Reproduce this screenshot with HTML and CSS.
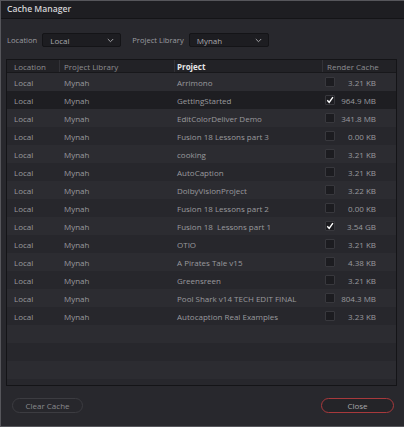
FILE: index.html
```html
<!DOCTYPE html>
<html>
<head>
<meta charset="utf-8">
<link rel="stylesheet" href="styles.css">
</head>
<body>
<div class="dialog">
  <div class="titlebar">Cache Manager</div>
  <div class="content">
    <div class="filters">
      <span class="flabel">Location</span>
      <div class="dropdown loc"><span>Local</span><svg class="chev" width="7" height="5" viewBox="0 0 7 5"><path d="M0.8 1 L3.5 3.7 L6.2 1" fill="none" stroke="#a0a0a4" stroke-width="1"/></svg></div>
      <span class="flabel lib">Project Library</span>
      <div class="dropdown"><span>Mynah</span><svg class="chev" width="7" height="5" viewBox="0 0 7 5"><path d="M0.8 1 L3.5 3.7 L6.2 1" fill="none" stroke="#a0a0a4" stroke-width="1"/></svg></div>
    </div>
    <div class="table">
      <div class="row head">
        <div class="c c1">Location</div>
        <div class="c c2">Project Library</div>
        <div class="c c3 bold">Project</div>
        <div class="c c4">Render Cache</div>
      </div>
      <div class="body">
        <div class="row odd"><div class="c c1">Local</div><div class="c c2">Mynah</div><div class="c c3">Arrimono</div><div class="c c4"><span class="cb"></span><span class="sz">3.21 KB</span></div></div>
        <div class="row sel"><div class="c c1">Local</div><div class="c c2">Mynah</div><div class="c c3">GettingStarted</div><div class="c c4"><span class="cb on"><svg width="10" height="10" viewBox="0 0 10 10"><path d="M2.3 5.3 L4.2 7.4 L7.9 2.2" fill="none" stroke="#ffffff" stroke-width="1.4"/></svg></span><span class="sz">964.9 MB</span></div></div>
        <div class="row odd"><div class="c c1">Local</div><div class="c c2">Mynah</div><div class="c c3">EditColorDeliver Demo</div><div class="c c4"><span class="cb"></span><span class="sz">341.8 MB</span></div></div>
        <div class="row even"><div class="c c1">Local</div><div class="c c2">Mynah</div><div class="c c3">Fusion 18 Lessons part 3</div><div class="c c4"><span class="cb"></span><span class="sz">0.00 KB</span></div></div>
        <div class="row odd"><div class="c c1">Local</div><div class="c c2">Mynah</div><div class="c c3">cooking</div><div class="c c4"><span class="cb"></span><span class="sz">3.21 KB</span></div></div>
        <div class="row even"><div class="c c1">Local</div><div class="c c2">Mynah</div><div class="c c3">AutoCaption</div><div class="c c4"><span class="cb"></span><span class="sz">3.21 KB</span></div></div>
        <div class="row odd"><div class="c c1">Local</div><div class="c c2">Mynah</div><div class="c c3">DolbyVisionProject</div><div class="c c4"><span class="cb"></span><span class="sz">3.22 KB</span></div></div>
        <div class="row even"><div class="c c1">Local</div><div class="c c2">Mynah</div><div class="c c3">Fusion 18 Lessons part 2</div><div class="c c4"><span class="cb"></span><span class="sz">0.00 KB</span></div></div>
        <div class="row odd"><div class="c c1">Local</div><div class="c c2">Mynah</div><div class="c c3">Fusion 18&nbsp; Lessons part 1</div><div class="c c4"><span class="cb on"><svg width="10" height="10" viewBox="0 0 10 10"><path d="M2.3 5.3 L4.2 7.4 L7.9 2.2" fill="none" stroke="#ffffff" stroke-width="1.4"/></svg></span><span class="sz">3.54 GB</span></div></div>
        <div class="row even"><div class="c c1">Local</div><div class="c c2">Mynah</div><div class="c c3">OTIO</div><div class="c c4"><span class="cb"></span><span class="sz">3.21 KB</span></div></div>
        <div class="row odd"><div class="c c1">Local</div><div class="c c2">Mynah</div><div class="c c3">A Pirates Tale v15</div><div class="c c4"><span class="cb"></span><span class="sz">4.38 KB</span></div></div>
        <div class="row even"><div class="c c1">Local</div><div class="c c2">Mynah</div><div class="c c3">Greensreen</div><div class="c c4"><span class="cb"></span><span class="sz">3.21 KB</span></div></div>
        <div class="row odd"><div class="c c1">Local</div><div class="c c2">Mynah</div><div class="c c3">Pool Shark v14 TECH EDIT FINAL</div><div class="c c4"><span class="cb"></span><span class="sz">804.3 MB</span></div></div>
        <div class="row even"><div class="c c1">Local</div><div class="c c2">Mynah</div><div class="c c3">Autocaption Real Examples</div><div class="c c4"><span class="cb"></span><span class="sz">3.23 KB</span></div></div>
        <div class="row odd"></div>
        <div class="row even"></div>
        <div class="row odd"></div>
        <div class="row even"></div>
      </div>
    </div>
    <div class="buttons">
      <button class="btn">Clear Cache</button>
      <button class="btn close">Close</button>
    </div>
  </div>
</div>
</body>
</html>
```
FILE: styles.css
```css
* { box-sizing: border-box; }
html, body { margin: 0; padding: 0; }
body {
  width: 404px;
  height: 427px;
  background: #56565b;
  font-family: "Open Sans", "Noto Sans", sans-serif;
  overflow: hidden;
}
.dialog {
  width: 403px;
  height: 425px;
  margin: 1px 0 0 1px;
  background: #28282d;
  display: flex;
  flex-direction: column;
}
.titlebar {
  height: 18px;
  background: #1e1e22;
  border-bottom: 1px solid #141417;
  color: #d2d2d4;
  font-size: 8.6px;
  font-weight: 600;
  line-height: 17px;
  padding-left: 6px;
}
.content {
  flex: 1;
  display: flex;
  flex-direction: column;
  padding: 0 6px 0 5px;
}
.filters {
  display: flex;
  align-items: center;
  height: 14px;
  margin-top: 14px;
  color: #9c9ca0;
  font-size: 7.6px;
}
.flabel { margin-left: 1px; }
.flabel.lib { margin-left: 11px; }
.dropdown {
  height: 14px;
  width: 80px;
  margin-left: 5px;
  background: #1d1d21;
  border: 1px solid #141417;
  border-radius: 2px;
  display: flex;
  align-items: center;
  justify-content: space-between;
  padding: 0 6px 0 7px;
  color: #a8a8ac;
  font-size: 8px;
}
.dropdown.loc { width: 79px; }
.chev { display: block; }
.table {
  margin-top: 12px;
  width: 391px;
  height: 327px;
  border: 1px solid #141417;
  background: #27272c;
  display: flex;
  flex-direction: column;
  overflow: hidden;
}
.row {
  display: flex;
  align-items: center;
  height: 18px;
  flex: none;
  font-size: 8px;
  color: #9a9a9e;
}
.row.head {
  height: 13px;
  background: #222226;
  border-bottom: 1px solid #18181b;
  color: #8e8e92;
}
.body { flex: 1; overflow: hidden; }
.row.odd { background: #2c2c31; }
.row.even { background: #27272c; }
.row.sel { background: #1e1e22; }
.c { height: 100%; display: flex; align-items: center; white-space: nowrap; }
.c1 { width: 52px; padding-left: 7px; }
.c2 { width: 115px; padding-left: 5px; }
.c3 { width: 148px; padding-left: 3px; }
.c4 { flex: 1; padding-left: 3px; }
.head .c2, .head .c3, .head .c4 { border-left: 1px solid #323237; padding-left: 4px; }
.head .c3 { padding-left: 2px; }
.bold { font-weight: 700; color: #e6e6e8; }
.cb {
  width: 10px;
  height: 10px;
  background: #1c1c20;
  border: 1px solid #38383d;
  border-radius: 1px;
  position: relative;
}
.cb svg { position: absolute; left: -1px; top: -1px; }
.sz { width: 41px; text-align: right; }
.buttons {
  display: flex;
  justify-content: space-between;
  margin-top: 12px;
  padding: 0 4px 0 6px;
}
.btn {
  height: 15px;
  width: 71px;
  border-radius: 8px;
  border: 1px solid #3c3c41;
  background: #27272c;
  color: #8a8a8e;
  font-family: "Open Sans", "Noto Sans", sans-serif;
  font-size: 8px;
  padding: 0;
  line-height: 13px;
}
.btn.close {
  width: 73px;
  border-color: #a8393c;
  background: #242428;
  color: #a8a8ac;
}
```
